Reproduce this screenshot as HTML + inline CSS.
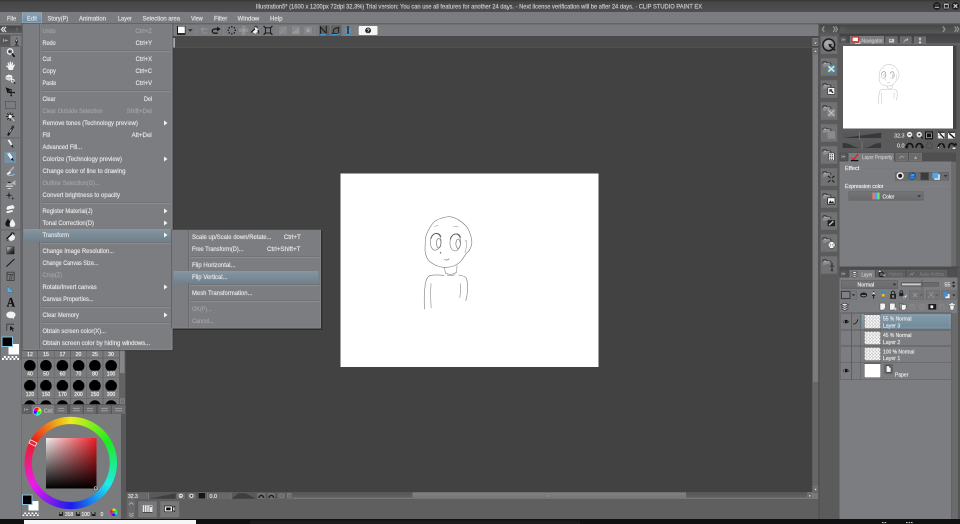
<!DOCTYPE html>
<html lang="en"><head><meta charset="utf-8"><title>CLIP STUDIO PAINT EX - Illustration5</title>
<style>
html,body{margin:0;padding:0;background:#424242;overflow:hidden}
body{width:960px;height:524px;position:relative}
#stage{position:absolute;left:0;top:0;width:1920px;height:1048px;transform:scale(.5);transform-origin:0 0;will-change:transform;font-family:"Liberation Sans",sans-serif;overflow:hidden}
#stage div,#stage span.t{position:absolute}
#stage span.t{white-space:nowrap;display:block;-webkit-text-stroke:.35px currentColor}
#stage svg{position:absolute;left:0;top:0}
#menus{left:0;top:0;width:1920px;height:1048px}

</style></head><body>
<div id="stage">
<div style="left:0px;top:0px;width:1920px;height:24px;background:linear-gradient(#363636 0,#474747 18%,#505050 100%);"></div>
<span class="t" style="top:5.61px;font-size:12px;line-height:14.4px;color:#c9c9c9;left:471.09px;width:973.83px;text-align:center;transform-origin:50% 50%;transform:scaleX(0.959);">Illustration5* (1600 x 1200px 72dpi 32.3%)  Trial version: You can use all features for another 24 days. - Next license verification will be after 24 days. - CLIP STUDIO PAINT EX</span>
<div style="left:0px;top:24px;width:1920px;height:23px;background:#7b7c7f;"></div>
<div style="left:0px;top:45.8px;width:1920px;height:3.6px;background:#646466;"></div>
<div style="left:44px;top:25.2px;width:39.6px;height:20.8px;background:linear-gradient(#86a2b6,#6d8da4);border:1px solid #9cb9cd;box-sizing:border-box;"></div>
<span class="t" style="top:29.64px;font-size:12.2px;line-height:14.64px;color:#e0e0e0;left:14px;transform-origin:0 50%;transform:scaleX(0.936);">File</span>
<span class="t" style="top:29.64px;font-size:12.2px;line-height:14.64px;color:#e0e0e0;left:54px;transform-origin:0 50%;transform:scaleX(0.951);">Edit</span>
<span class="t" style="top:29.64px;font-size:12.2px;line-height:14.64px;color:#e0e0e0;left:95px;transform-origin:0 50%;transform:scaleX(0.930);">Story(P)</span>
<span class="t" style="top:29.64px;font-size:12.2px;line-height:14.64px;color:#e0e0e0;left:158.4px;transform-origin:0 50%;transform:scaleX(0.995);">Animation</span>
<span class="t" style="top:29.64px;font-size:12.2px;line-height:14.64px;color:#e0e0e0;left:236px;transform-origin:0 50%;transform:scaleX(0.898);">Layer</span>
<span class="t" style="top:29.64px;font-size:12.2px;line-height:14.64px;color:#e0e0e0;left:285px;transform-origin:0 50%;transform:scaleX(0.962);">Selection area</span>
<span class="t" style="top:29.64px;font-size:12.2px;line-height:14.64px;color:#e0e0e0;left:381.5px;transform-origin:0 50%;transform:scaleX(0.896);">View</span>
<span class="t" style="top:29.64px;font-size:12.2px;line-height:14.64px;color:#e0e0e0;left:427.5px;transform-origin:0 50%;transform:scaleX(0.977);">Filter</span>
<span class="t" style="top:29.64px;font-size:12.2px;line-height:14.64px;color:#e0e0e0;left:475px;transform-origin:0 50%;transform:scaleX(1.002);">Window</span>
<span class="t" style="top:29.64px;font-size:12.2px;line-height:14.64px;color:#e0e0e0;left:540px;transform-origin:0 50%;transform:scaleX(0.996);">Help</span>
<div style="left:0px;top:49.4px;width:1638px;height:23.2px;background:#7b7c7f;"></div>
<div style="left:44px;top:72.4px;width:1594px;height:22.6px;background:#4a4a4b;"></div>
<div style="left:345.8px;top:75.8px;width:4.4px;height:18.8px;background:#a6a6a8;"></div>
<div style="left:252px;top:95px;width:1373px;height:890px;background:#424242;"></div>
<div style="left:252px;top:94.6px;width:1386px;height:1.6px;background:#58585a;"></div>
<div style="left:681px;top:347px;width:516px;height:387px;background:#ffffff;"></div>
<div style="left:1625px;top:95px;width:12.2px;height:890px;background:#666668;border-left:1px solid #78787a;box-sizing:border-box;"></div>
<div style="left:1625px;top:110px;width:12.2px;height:653px;background:#7b7b7d;"></div>
<div style="left:1624.6px;top:76px;width:12.8px;height:16px;background:#6c6c6e;border:1px solid #88888a;box-sizing:border-box;"></div>
<div style="left:1624.6px;top:96px;width:12.8px;height:12.8px;background:#6c6c6e;border:1px solid #88888a;box-sizing:border-box;"></div>
<div style="left:1624.6px;top:973px;width:12.8px;height:12px;background:#6c6c6e;border:1px solid #88888a;box-sizing:border-box;"></div>
<div style="left:252px;top:984.4px;width:1386px;height:14px;background:#59595a;"></div>
<div style="left:585px;top:985.2px;width:1029px;height:12.4px;background:linear-gradient(#565658,#626264 70%,#7a7a7c 92%);"></div>
<div style="left:825px;top:985.2px;width:546.8px;height:12.4px;background:linear-gradient(#828284,#747476);"></div>
<div style="left:1615px;top:985px;width:10px;height:13px;background:#6c6c6e;border:1px solid #88888a;box-sizing:border-box;"></div>
<div style="left:1625px;top:985px;width:12.4px;height:13px;background:#78787a;"></div>
<div style="left:253.6px;top:985.2px;width:42.8px;height:12.8px;background:#68686a;"></div>
<span class="t" style="top:985.87px;font-size:10.8px;line-height:12.96px;color:#e4e4e4;left:256.4px;transform-origin:0 50%;transform:scaleX(0.932);">32.3</span>
<div style="left:353.2px;top:985.6px;width:16.8px;height:12px;background:#707072;"></div>
<div style="left:375.2px;top:985.6px;width:15.6px;height:12px;background:#707072;"></div>
<div style="left:396px;top:985.2px;width:15.2px;height:12.8px;background:#161616;border:1px solid #707072;box-sizing:border-box;"></div>
<div style="left:414px;top:985.2px;width:1.6px;height:12.8px;background:#7d7d7f;"></div>
<div style="left:416.4px;top:985.2px;width:44.8px;height:12.8px;background:#68686a;"></div>
<span class="t" style="top:985.87px;font-size:10.8px;line-height:12.96px;color:#e4e4e4;left:418.6px;transform-origin:0 50%;transform:scaleX(0.999);">0.0</span>
<div style="left:514px;top:985.6px;width:17.2px;height:12px;background:#707072;"></div>
<div style="left:534.8px;top:985.6px;width:15.6px;height:12px;background:#707072;"></div>
<div style="left:555.2px;top:985.6px;width:15.6px;height:12px;background:#6a6a6c;"></div>
<div style="left:574px;top:986px;width:8.8px;height:11.2px;background:#707072;border:1px solid #88888a;box-sizing:border-box;"></div>
<div style="left:252px;top:998px;width:1386px;height:40px;background:#5f5f60;"></div>
<div style="left:255px;top:999px;width:15px;height:38px;background:#6a6a6c;"></div>
<div style="left:276px;top:1002px;width:38.4px;height:32.6px;background:#78787a;border:1px solid #6a6a6b;box-sizing:border-box;"></div>
<div style="left:320px;top:1002px;width:38.8px;height:32.6px;background:#78787a;border:1px solid #6a6a6b;box-sizing:border-box;"></div>
<div style="left:0px;top:1038px;width:1920px;height:10px;background:#101011;"></div>
<div style="left:48px;top:1039.6px;width:344px;height:8.4px;background:#f6f6f6;"></div>
<div style="left:500px;top:1040.8px;width:660px;height:7.2px;background:#1c1c1d;"></div>
<div style="left:0px;top:47px;width:44px;height:991px;background:#7b7c7f;"></div>
<div style="left:42.6px;top:47px;width:1.8px;height:991px;background:#606061;"></div>
<div style="left:0px;top:51.2px;width:42.6px;height:15.2px;background:linear-gradient(#474748,#5a5a5b);"></div>
<div style="left:0px;top:69.2px;width:42.6px;height:22.8px;background:#5a5a5b;"></div>
<div style="left:2.4px;top:71.2px;width:16.4px;height:16.4px;background:#555557;"></div>
<div style="left:20.8px;top:70.8px;width:21.8px;height:22px;background:#7b7c7f;"></div>
<div style="left:0px;top:92.4px;width:42.6px;height:1.6px;background:#5e5e5f;"></div>
<div style="left:0px;top:92.4px;width:2px;height:628px;background:#666668;"></div>
<div style="left:40px;top:92.4px;width:2.6px;height:628px;background:#6a6a6c;"></div>
<div style="left:2px;top:275.2px;width:39.2px;height:1.8px;background:#5e5e5f;"></div>
<div style="left:2px;top:277px;width:39.2px;height:1.4px;background:#8b8b8e;"></div>
<div style="left:2px;top:459.2px;width:39.2px;height:1.8px;background:#5e5e5f;"></div>
<div style="left:2px;top:461px;width:39.2px;height:1.4px;background:#8b8b8e;"></div>
<div style="left:8.6px;top:304px;width:23.4px;height:22px;background:#7492a6;"></div>
<div style="left:17.2px;top:687.6px;width:20.8px;height:21px;background:#ffffff;"></div>
<div style="left:3.2px;top:672.8px;width:22.4px;height:21.6px;background:#000;border:2.200px solid #86bfe4;box-sizing:border-box;"></div>
<div style="left:3.8px;top:712.4px;width:34.2px;height:7.6px;background:repeating-conic-gradient(#fff 0 25%,#7b7c7f 0 50%) 0 0/7.600px 7.600px;"></div>
<div style="left:44.4px;top:676px;width:194.6px;height:133px;background:#7a7b7d;"></div>
<div style="left:44.4px;top:715.4px;width:194.4px;height:1.6px;background:#646466;"></div>
<span class="t" style="top:701.81px;font-size:10.8px;line-height:12.96px;color:#f0f0f0;left:33.69px;width:52.01px;text-align:center;transform-origin:50% 50%;transform:scaleX(0.950);">12</span>
<span class="t" style="top:701.81px;font-size:10.8px;line-height:12.96px;color:#f0f0f0;left:65.79px;width:52.01px;text-align:center;transform-origin:50% 50%;transform:scaleX(0.950);">15</span>
<span class="t" style="top:701.81px;font-size:10.8px;line-height:12.96px;color:#f0f0f0;left:98.79px;width:52.01px;text-align:center;transform-origin:50% 50%;transform:scaleX(0.950);">17</span>
<span class="t" style="top:701.81px;font-size:10.8px;line-height:12.96px;color:#f0f0f0;left:131.29px;width:52.01px;text-align:center;transform-origin:50% 50%;transform:scaleX(0.950);">20</span>
<span class="t" style="top:701.81px;font-size:10.8px;line-height:12.96px;color:#f0f0f0;left:163.79px;width:52.01px;text-align:center;transform-origin:50% 50%;transform:scaleX(0.950);">25</span>
<span class="t" style="top:701.81px;font-size:10.8px;line-height:12.96px;color:#f0f0f0;left:196.29px;width:52.01px;text-align:center;transform-origin:50% 50%;transform:scaleX(0.950);">30</span>
<div style="left:44.4px;top:754.6px;width:194.4px;height:1.6px;background:#646466;"></div>
<span class="t" style="top:741.01px;font-size:10.8px;line-height:12.96px;color:#f0f0f0;left:33.69px;width:52.01px;text-align:center;transform-origin:50% 50%;transform:scaleX(0.950);">40</span>
<span class="t" style="top:741.01px;font-size:10.8px;line-height:12.96px;color:#f0f0f0;left:65.79px;width:52.01px;text-align:center;transform-origin:50% 50%;transform:scaleX(0.950);">50</span>
<span class="t" style="top:741.01px;font-size:10.8px;line-height:12.96px;color:#f0f0f0;left:98.79px;width:52.01px;text-align:center;transform-origin:50% 50%;transform:scaleX(0.950);">60</span>
<span class="t" style="top:741.01px;font-size:10.8px;line-height:12.96px;color:#f0f0f0;left:131.29px;width:52.01px;text-align:center;transform-origin:50% 50%;transform:scaleX(0.950);">70</span>
<span class="t" style="top:741.01px;font-size:10.8px;line-height:12.96px;color:#f0f0f0;left:163.79px;width:52.01px;text-align:center;transform-origin:50% 50%;transform:scaleX(0.950);">80</span>
<span class="t" style="top:741.01px;font-size:10.8px;line-height:12.96px;color:#f0f0f0;left:193.29px;width:58.02px;text-align:center;transform-origin:50% 50%;transform:scaleX(0.950);">100</span>
<div style="left:44.4px;top:795.6px;width:194.4px;height:1.6px;background:#646466;"></div>
<span class="t" style="top:782.01px;font-size:10.8px;line-height:12.96px;color:#f0f0f0;left:30.69px;width:58.02px;text-align:center;transform-origin:50% 50%;transform:scaleX(0.950);">120</span>
<span class="t" style="top:782.01px;font-size:10.8px;line-height:12.96px;color:#f0f0f0;left:62.79px;width:58.02px;text-align:center;transform-origin:50% 50%;transform:scaleX(0.950);">150</span>
<span class="t" style="top:782.01px;font-size:10.8px;line-height:12.96px;color:#f0f0f0;left:95.79px;width:58.02px;text-align:center;transform-origin:50% 50%;transform:scaleX(0.950);">170</span>
<span class="t" style="top:782.01px;font-size:10.8px;line-height:12.96px;color:#f0f0f0;left:128.29px;width:58.02px;text-align:center;transform-origin:50% 50%;transform:scaleX(0.950);">200</span>
<span class="t" style="top:782.01px;font-size:10.8px;line-height:12.96px;color:#f0f0f0;left:160.79px;width:58.02px;text-align:center;transform-origin:50% 50%;transform:scaleX(0.950);">250</span>
<span class="t" style="top:782.01px;font-size:10.8px;line-height:12.96px;color:#f0f0f0;left:193.29px;width:58.02px;text-align:center;transform-origin:50% 50%;transform:scaleX(0.950);">300</span>
<div style="left:44.4px;top:808.2px;width:194.4px;height:1.6px;background:#646466;"></div>
<div style="left:74.2px;top:676px;width:1.6px;height:133px;background:#646466;"></div>
<div style="left:107.8px;top:676px;width:1.6px;height:133px;background:#646466;"></div>
<div style="left:140.2px;top:676px;width:1.6px;height:133px;background:#646466;"></div>
<div style="left:172.8px;top:676px;width:1.6px;height:133px;background:#646466;"></div>
<div style="left:205.2px;top:676px;width:1.6px;height:133px;background:#646466;"></div>
<div style="left:237.8px;top:676px;width:1.6px;height:133px;background:#646466;"></div>
<div style="left:239.2px;top:676px;width:11.2px;height:133px;background:#636364;"></div>
<div style="left:239.8px;top:701px;width:9.2px;height:44.6px;background:#878789;"></div>
<div style="left:239.8px;top:797.2px;width:10px;height:10px;background:#707072;border:1px solid #909092;box-sizing:border-box;"></div>
<div style="left:250.4px;top:73px;width:2px;height:965px;background:#4e4e4f;"></div>
<div style="left:44.4px;top:809px;width:206px;height:229px;background:#7a7b7d;"></div>
<div style="left:44.4px;top:808.8px;width:206.4px;height:18.8px;background:#58585a;"></div>
<div style="left:44.8px;top:810.8px;width:16px;height:16px;background:#626264;"></div>
<div style="left:63px;top:810.4px;width:45.8px;height:17.6px;background:#7a7b7d;"></div>
<span class="t" style="top:814.75px;font-size:10.8px;line-height:12.96px;color:#c2c2c4;left:88px;transform-origin:0 50%;transform:scaleX(0.958);">Col:</span>
<div style="left:111px;top:811.2px;width:23px;height:16px;background:#6c6c6e;border:1px solid #78787a;box-sizing:border-box;"></div>
<div style="left:140.8px;top:811.2px;width:24px;height:16px;background:#6c6c6e;border:1px solid #78787a;box-sizing:border-box;"></div>
<div style="left:168.4px;top:811.2px;width:22.8px;height:16px;background:#6c6c6e;border:1px solid #78787a;box-sizing:border-box;"></div>
<div style="left:197px;top:811.2px;width:24px;height:16px;background:#6c6c6e;border:1px solid #78787a;box-sizing:border-box;"></div>
<div style="left:224.4px;top:811.2px;width:25.2px;height:16px;background:#6c6c6e;border:1px solid #78787a;box-sizing:border-box;"></div>
<div style="left:241.6px;top:827.6px;width:9.4px;height:210.4px;background:#59595b;"></div>
<div style="left:48.3px;top:832.6px;width:186.8px;height:186.8px;border-radius:50%;background:conic-gradient(hsl(60,85%,52%) 0deg,hsl(90,85%,52%) 30deg,hsl(120,85%,52%) 60deg,hsl(150,85%,52%) 90deg,hsl(180,85%,52%) 120deg,hsl(210,85%,52%) 150deg,hsl(240,85%,52%) 180deg,hsl(270,85%,52%) 210deg,hsl(300,85%,52%) 240deg,hsl(330,85%,52%) 270deg,hsl(0,85%,52%) 300deg,hsl(30,85%,52%) 330deg,hsl(60,85%,52%) 360deg);-webkit-mask:radial-gradient(circle closest-side,transparent 83%,#000 84.600%,#000 98.900%,transparent 100%);mask:radial-gradient(circle closest-side,transparent 83%,#000 84.600%,#000 98.900%,transparent 100%);"></div>
<div style="left:91.6px;top:876px;width:101.6px;height:101.4px;background:linear-gradient(to top,#000,rgba(0,0,0,0)),linear-gradient(to right,#f4eeee,#ee1c26);"></div>
<div style="left:57.4px;top:1001.6px;width:19.2px;height:19.4px;background:#fff;"></div>
<div style="left:44.4px;top:989.2px;width:20.4px;height:20.4px;background:#000;border:2.200px solid #86bfe4;box-sizing:border-box;"></div>
<div style="left:45.2px;top:1024.6px;width:32.4px;height:7.2px;background:repeating-conic-gradient(#fff 0 25%,#7b7c7f 0 50%) 0 0/7.200px 7.200px;"></div>
<div style="left:117.6px;top:1023.6px;width:8.4px;height:8.4px;background:#222;"></div>
<div style="left:119.2px;top:1025.2px;width:5.2px;height:2px;background:#ddd;"></div>
<span class="t" style="top:1022.47px;font-size:10.8px;line-height:12.96px;color:#ececec;left:130px;transform-origin:0 50%;transform:scaleX(0.910);">358</span>
<div style="left:152px;top:1023.6px;width:8.4px;height:8.4px;background:#222;"></div>
<div style="left:153.6px;top:1025.2px;width:5.2px;height:2px;background:#ddd;"></div>
<span class="t" style="top:1022.47px;font-size:10.8px;line-height:12.96px;color:#ececec;left:163px;transform-origin:0 50%;transform:scaleX(0.910);">100</span>
<div style="left:182.6px;top:1023.6px;width:8.4px;height:8.4px;background:#222;"></div>
<div style="left:184.2px;top:1025.2px;width:5.2px;height:2px;background:#ddd;"></div>
<span class="t" style="top:1022.47px;font-size:10.8px;line-height:12.96px;color:#ececec;left:201.4px;transform-origin:0 50%;transform:scaleX(0.932);">0</span>
<div style="left:219.6px;top:1017.2px;width:15.2px;height:15.2px;border-radius:50%;background:conic-gradient(#ffff00,#00ff00 60deg,#00ffff 120deg,#0000ff 180deg,#ff00ff 240deg,#ff0000 300deg,#ffff00 360deg);-webkit-mask:radial-gradient(circle closest-side,transparent 38%,#000 46%,#000 96%,transparent 100%);mask:radial-gradient(circle closest-side,transparent 38%,#000 46%,#000 96%,transparent 100%);"></div>
<div style="left:65.8px;top:813.6px;width:17.2px;height:17.2px;border-radius:50%;background:conic-gradient(#ff0000,#ffff00 60deg,#00ff00 120deg,#00ffff 180deg,#0000ff 240deg,#ff00ff 300deg,#ff0000 360deg);border:1px solid #eee;box-sizing:border-box;"></div>
<div style="left:393px;top:50.8px;width:1.2px;height:20.4px;background:#8a8b8e;"></div>
<div style="left:447px;top:50.8px;width:1.2px;height:20.4px;background:#8a8b8e;"></div>
<div style="left:552px;top:50.8px;width:1.2px;height:20.4px;background:#8a8b8e;"></div>
<div style="left:629px;top:50.8px;width:1.2px;height:20.4px;background:#8a8b8e;"></div>
<div style="left:710px;top:50.8px;width:1.2px;height:20.4px;background:#8a8b8e;"></div>
<div style="left:1638px;top:47px;width:282px;height:991px;background:#5b5b5c;"></div>
<div style="left:1637.2px;top:47px;width:1.6px;height:991px;background:#4e4e4f;"></div>
<div style="left:1638.8px;top:49.2px;width:38px;height:17.8px;background:linear-gradient(#464647,#58585a);"></div>
<div style="left:1677.8px;top:49.2px;width:242.2px;height:17.8px;background:linear-gradient(#464647,#58585a);"></div>
<div style="left:1676.6px;top:49.2px;width:1.6px;height:17.8px;background:#3c3c3d;"></div>
<div style="left:1641.2px;top:71.6px;width:34px;height:36.6px;background:#727274;border:1px solid #666668;box-sizing:border-box;"></div>
<div style="left:1641.2px;top:115.6px;width:34px;height:36.6px;background:#727274;border:1px solid #666668;box-sizing:border-box;"></div>
<div style="left:1641.2px;top:159.6px;width:34px;height:36.6px;background:#727274;border:1px solid #666668;box-sizing:border-box;"></div>
<div style="left:1641.2px;top:203.6px;width:34px;height:36.6px;background:#727274;border:1px solid #666668;box-sizing:border-box;"></div>
<div style="left:1641.2px;top:247.6px;width:34px;height:36.6px;background:#727274;border:1px solid #666668;box-sizing:border-box;"></div>
<div style="left:1641.2px;top:291.6px;width:34px;height:36.6px;background:#727274;border:1px solid #666668;box-sizing:border-box;"></div>
<div style="left:1641.2px;top:335.6px;width:34px;height:36.6px;background:#727274;border:1px solid #666668;box-sizing:border-box;"></div>
<div style="left:1641.2px;top:379.6px;width:34px;height:36.6px;background:#727274;border:1px solid #666668;box-sizing:border-box;"></div>
<div style="left:1641.2px;top:423.6px;width:34px;height:36.6px;background:#727274;border:1px solid #666668;box-sizing:border-box;"></div>
<div style="left:1641.2px;top:467.6px;width:34px;height:36.6px;background:#727274;border:1px solid #666668;box-sizing:border-box;"></div>
<div style="left:1641.2px;top:511.6px;width:34px;height:36.6px;background:#727274;border:1px solid #666668;box-sizing:border-box;"></div>
<div style="left:1679px;top:67px;width:241px;height:238px;background:#5b5b5c;"></div>
<div style="left:1679px;top:67px;width:241px;height:19.2px;background:linear-gradient(#424244,#4e4e50);"></div>
<div style="left:1679px;top:86px;width:241px;height:5.2px;background:#616163;"></div>
<div style="left:1680.6px;top:73.2px;width:12.4px;height:12.4px;background:#57575a;"></div>
<div style="left:1699.6px;top:71.6px;width:68.8px;height:16.8px;background:#7b7c7f;"></div>
<span class="t" style="top:74.55px;font-size:10.8px;line-height:12.96px;color:#c4c4c6;left:1723.2px;transform-origin:0 50%;transform:scaleX(0.926);">Navigator</span>
<div style="left:1771.2px;top:73.2px;width:24px;height:15.2px;background:#6a6a6c;border:1px solid #78787a;box-sizing:border-box;"></div>
<div style="left:1800.4px;top:73.2px;width:23px;height:15.2px;background:#6a6a6c;border:1px solid #78787a;box-sizing:border-box;"></div>
<div style="left:1828px;top:73.2px;width:24px;height:15.2px;background:#6a6a6c;border:1px solid #78787a;box-sizing:border-box;"></div>
<div style="left:1681.2px;top:91.2px;width:238px;height:214px;background:#5b5b5c;"></div>
<div style="left:1686px;top:92px;width:220px;height:165px;background:#ffffff;"></div>
<div style="left:1906.4px;top:91.2px;width:6.4px;height:167.2px;background:#434345;"></div>
<div style="left:1684px;top:264.8px;width:79.2px;height:12px;background:#58585a;"></div>
<div style="left:1684px;top:284.4px;width:79.2px;height:12.8px;background:#58585a;"></div>
<span class="t" style="top:264.67px;font-size:10.8px;line-height:12.96px;color:#d9d9db;right:110.8px;transform-origin:100% 50%;transform:scaleX(0.990);">32.3</span>
<span class="t" style="top:285.27px;font-size:10.8px;line-height:12.96px;color:#d9d9db;right:110.8px;transform-origin:100% 50%;transform:scaleX(1.012);">0.0</span>
<div style="left:1679px;top:304.8px;width:241px;height:18px;background:#4f4f51;"></div>
<div style="left:1680.6px;top:306.8px;width:12.4px;height:12.8px;background:#57575a;"></div>
<div style="left:1697.2px;top:305.6px;width:90.8px;height:17.2px;background:#7b7c7f;"></div>
<span class="t" style="top:309.49px;font-size:10px;line-height:12px;color:#c3c3c5;left:1723.6px;transform-origin:0 50%;transform:scaleX(0.930);">Layer Property</span>
<div style="left:1790.8px;top:306.4px;width:24.8px;height:16px;background:#6a6a6c;border:1px solid #78787a;box-sizing:border-box;"></div>
<div style="left:1818.4px;top:306.4px;width:25.6px;height:16px;background:#6a6a6c;border:1px solid #78787a;box-sizing:border-box;"></div>
<div style="left:1679px;top:322.8px;width:224.4px;height:210.4px;background:#7c7d80;"></div>
<div style="left:1903.2px;top:322.8px;width:10.4px;height:210.4px;background:#6c6c6e;border:1px solid #5e5e60;box-sizing:border-box;"></div>
<div style="left:1912px;top:304.8px;width:8px;height:230.4px;background:#5b5b5c;"></div>
<span class="t" style="top:329.64px;font-size:11px;line-height:13.2px;color:#ededed;left:1689.6px;transform-origin:0 50%;transform:scaleX(1.024);">Effect</span>
<div style="left:1719.2px;top:335.6px;width:180px;height:1px;background:#77787b;"></div>
<div style="left:1789.6px;top:344px;width:108.8px;height:17px;background:#6c6c6f;border:1px solid #5f5f61;box-sizing:border-box;border-radius:1px;"></div>
<span class="t" style="top:366.44px;font-size:11px;line-height:13.2px;color:#ededed;left:1689.6px;transform-origin:0 50%;transform:scaleX(0.947);">Expression color</span>
<div style="left:1769.6px;top:372.4px;width:130px;height:1px;background:#86878a;"></div>
<div style="left:1697.2px;top:382.6px;width:149.6px;height:18.8px;background:linear-gradient(#747477,#6a6a6d);border:1px solid #5f5f61;box-sizing:border-box;border-radius:1px;"></div>
<span class="t" style="top:386.64px;font-size:11px;line-height:13.2px;color:#ededed;left:1764.6px;transform-origin:0 50%;transform:scaleX(0.898);">Color</span>
<div style="left:1679px;top:533.2px;width:241px;height:22px;background:#4f4f51;"></div>
<div style="left:1679px;top:535.2px;width:241px;height:2.4px;background:#4a4a4b;"></div>
<div style="left:1680.6px;top:541.2px;width:12.4px;height:12.8px;background:#57575a;"></div>
<div style="left:1698.8px;top:539.6px;width:51.2px;height:17.6px;background:#7b7c7f;"></div>
<span class="t" style="top:542.67px;font-size:10.8px;line-height:12.96px;color:#c9c9cb;left:1723.2px;transform-origin:0 50%;transform:scaleX(0.800);">Layer</span>
<div style="left:1752.4px;top:540px;width:58px;height:16px;background:#5d5d5f;border:1px solid #6a6a6c;box-sizing:border-box;"></div>
<span class="t" style="top:543.49px;font-size:10px;line-height:12px;color:#7b7b7d;left:1777.2px;transform-origin:0 50%;transform:scaleX(0.932);">History</span>
<div style="left:1812.8px;top:540px;width:80.8px;height:16px;background:#5d5d5f;border:1px solid #6a6a6c;box-sizing:border-box;"></div>
<span class="t" style="top:543.49px;font-size:10px;line-height:12px;color:#7b7b7d;left:1838.8px;transform-origin:0 50%;transform:scaleX(0.969);">Auto Action</span>
<div style="left:1679px;top:554.6px;width:236px;height:483.4px;background:#7c7d80;"></div>
<div style="left:1902px;top:626px;width:11.6px;height:412px;background:#6b6b6d;border-left:1px solid #5e5e60;box-sizing:border-box;"></div>
<div style="left:1915px;top:535.2px;width:5px;height:502.8px;background:#565657;"></div>
<div style="left:1682px;top:560px;width:114.4px;height:17.6px;background:linear-gradient(#747477,#6b6b6e);border:1px solid #5f5f61;box-sizing:border-box;border-radius:1px;"></div>
<span class="t" style="top:563.24px;font-size:11px;line-height:13.2px;color:#ededed;left:1694.27px;width:75.45px;text-align:center;transform-origin:50% 50%;transform:scaleX(0.937);">Normal</span>
<div style="left:1802px;top:564px;width:75.6px;height:9.4px;background:#6a6a6c;border:1px solid #58585a;box-sizing:border-box;"></div>
<span class="t" style="top:563.24px;font-size:11px;line-height:13.2px;color:#e4e4e6;left:1889px;transform-origin:0 50%;transform:scaleX(0.948);">55</span>
<div style="left:1681.2px;top:581.2px;width:32.4px;height:18px;background:#78797c;border:1px solid #68686a;box-sizing:border-box;"></div>
<div style="left:1682px;top:582px;width:18.8px;height:15.6px;background:#7f8083;border:2px solid #3e3e40;box-sizing:border-box;"></div>
<div style="left:1818px;top:581.2px;width:30px;height:18px;background:#747477;border:1px solid #646466;box-sizing:border-box;"></div>
<div style="left:1851.6px;top:581.2px;width:27.2px;height:18px;background:#747477;border:1px solid #646466;box-sizing:border-box;"></div>
<div style="left:1883.4px;top:581.2px;width:30px;height:18px;background:#747477;border:1px solid #646466;box-sizing:border-box;"></div>
<div style="left:1679px;top:602.8px;width:236px;height:1.2px;background:#747578;"></div>
<div style="left:1681.2px;top:625.2px;width:221.6px;height:1.6px;background:#5e5e60;"></div>
<div style="left:1722.8px;top:627.8px;width:179.2px;height:30.6px;background:linear-gradient(#849baa,#718a99);outline:1px dotted #90a6b3;outline-offset:-3px;"></div>
<div style="left:1681.2px;top:659px;width:221.6px;height:1.6px;background:#5e5e60;"></div>
<div style="left:1728.4px;top:628.6px;width:33.8px;height:29px;background:repeating-conic-gradient(#cbcbcb 0 25%,#ffffff 0 50%) 0 0/6.400px 6.400px;border:1.500px solid #454547;box-sizing:border-box;"></div>
<span class="t" style="top:631.3px;font-size:11px;line-height:13.2px;color:#e8e8ea;left:1765.8px;transform-origin:0 50%;transform:scaleX(0.897);">55 % Normal</span>
<span class="t" style="top:644.5px;font-size:11px;line-height:13.2px;color:#e8e8ea;left:1765.8px;transform-origin:0 50%;transform:scaleX(0.938);">Layer 3</span>
<div style="left:1681.2px;top:691.2px;width:221.6px;height:1.6px;background:#5e5e60;"></div>
<div style="left:1728.4px;top:661.6px;width:33.8px;height:28.2px;background:repeating-conic-gradient(#cbcbcb 0 25%,#ffffff 0 50%) 0 0/6.400px 6.400px;border:1.500px solid #454547;box-sizing:border-box;"></div>
<span class="t" style="top:664.3px;font-size:11px;line-height:13.2px;color:#e8e8ea;left:1765.8px;transform-origin:0 50%;transform:scaleX(0.897);">45 % Normal</span>
<span class="t" style="top:677.5px;font-size:11px;line-height:13.2px;color:#e8e8ea;left:1765.8px;transform-origin:0 50%;transform:scaleX(0.938);">Layer 2</span>
<div style="left:1681.2px;top:723.6px;width:221.6px;height:1.6px;background:#5e5e60;"></div>
<div style="left:1728.4px;top:693.8px;width:33.8px;height:28.4px;background:repeating-conic-gradient(#cbcbcb 0 25%,#ffffff 0 50%) 0 0/6.400px 6.400px;border:1.500px solid #454547;box-sizing:border-box;"></div>
<span class="t" style="top:696.5px;font-size:11px;line-height:13.2px;color:#e8e8ea;left:1765.8px;transform-origin:0 50%;transform:scaleX(0.898);">100 % Normal</span>
<span class="t" style="top:709.7px;font-size:11px;line-height:13.2px;color:#e8e8ea;left:1765.8px;transform-origin:0 50%;transform:scaleX(0.938);">Layer 1</span>
<div style="left:1681.2px;top:757.8px;width:221.6px;height:1.6px;background:#5e5e60;"></div>
<div style="left:1728.4px;top:726.8px;width:33.8px;height:29.2px;background:#ffffff;border:1.500px solid #454547;box-sizing:border-box;"></div>
<span class="t" style="top:743.3px;font-size:11px;line-height:13.2px;color:#e8e8ea;left:1790.4px;transform-origin:0 50%;transform:scaleX(0.913);">Paper</span>
<div style="left:1680.8px;top:626px;width:1.6px;height:134px;background:#5e5e60;"></div>
<div style="left:1702.4px;top:626px;width:1.6px;height:134px;background:#5e5e60;"></div>
<div style="left:1720.8px;top:626px;width:1.6px;height:134px;background:#5e5e60;"></div>
<div style="left:1902px;top:626px;width:1.2px;height:134px;background:#5e5e60;"></div>
<span class="t" style="top:589.2px;font-size:26px;line-height:31.2px;color:#101010;left:-6.87px;width:57.34px;text-align:center;transform-origin:50% 50%;transform:scaleX(0.900);font-family:'Liberation Serif',serif;font-weight:bold;">A</span>
<svg width="1920" height="1048" viewBox="0 0 960 524">
<g id="sk" fill="none" stroke="#7c7c7c" stroke-width=".62" stroke-linecap="round" stroke-linejoin="round"><path d="M449.8 216.7C452.5 217.0 455.5 218.1 458.3 219.8C461.1 221.5 464.8 224.2 466.9 227.1C469.0 229.9 470.3 234.1 471.1 236.9C471.9 239.8 472.0 242.0 471.7 244.2C471.4 246.4 470.2 248.7 469.3 250.3C468.4 251.9 467.6 251.8 466.2 253.6C464.8 255.4 462.6 259.3 460.7 261.3C458.8 263.3 456.9 264.6 454.6 265.6C452.3 266.6 448.7 267.1 446.7 267.4C444.7 267.7 444.3 267.6 442.4 267.2C440.5 266.8 437.4 266.2 435.1 265.0C432.8 263.8 430.0 262.2 428.4 260.1C426.8 258.1 425.8 255.3 425.3 252.7C424.8 250.0 425.0 247.2 425.2 244.2C425.4 241.1 425.1 238.1 426.5 234.4C427.9 230.7 431.2 224.9 433.9 222.2C436.5 219.4 439.8 218.8 442.4 217.9C445.0 217.0 447.1 216.4 449.8 216.7"/><ellipse cx="435.700" cy="241.900" rx="5.300" ry="8.300" transform="rotate(5 435.700 241.900)"/><ellipse cx="455.300" cy="242.500" rx="5.300" ry="8.400" transform="rotate(4 455.300 242.500)"/><ellipse cx="438.700" cy="243.200" rx="2.300" ry="4.800" stroke="#6c6c6c"/><ellipse cx="458.100" cy="243.700" rx="2.200" ry="4.600" stroke="#6c6c6c"/><path d="M430.800 238.600c.8-3.400 3.400-5.400 6.400-5.200c1.800.2 3 1.400 3.600 3.200M450.400 239c.8-3.400 3.600-5.400 6.600-5c1.800.4 3 1.600 3.400 3.400" stroke="#5c5c5c" stroke-width=".9"/><path d="M434.500 226.500l3.700-1.200M453.400 226.400c1.600-.4 3.400-.2 4.900.7" stroke="#a8a8a8"/><path d="M465 241.200c1.200-1.200 2-.4 1.800 1.400c-.2 3.400-.8 7-1.800 10" stroke="#9a9a9a"/><path d="M440.500 252.200l.3 1.200" stroke="#5c5c5c" stroke-width=".8"/><path d="M444.300 259.300c1.400 1.200 3.400 1 4.800-.5" stroke="#6a6a6a"/><path d="M444.400 267.300l1 5.800M457 265.700l-.4 6.600M445.600 273.200c3 1.800 7.400 1.600 10.600-.8M447 275c2.600 1 5.600.8 8-.4" stroke="#8c8c8c"/><path d="M444 275.400c-5-.6-10-.6-14 .2c-3 1.200-4.200 5-4.800 9c-.8 7-1.400 16-.6 24.400"/><path d="M431 283.600c-.6 8-.4 16 .2 24.400" stroke="#8c8c8c"/><path d="M458.600 275c3 .4 6 1 7.400 2.600c1.600 3 1.800 8 1.400 14c-.2 3.400-.8 6.400-1.600 9"/><path d="M460.400 283.600c.2 5 0 10-.6 14" stroke="#8c8c8c"/></g>
<use href="#sk" transform="translate(843 46) scale(.4264) translate(-340.500 -173.500)" stroke-width="1"/>
<circle cx="936.9" cy="6" r="3.900" fill="#202020"/>
<circle cx="946.3" cy="6" r="3.900" fill="#202020"/>
<circle cx="955.5" cy="6" r="3.900" fill="#202020"/>
<path d="M934.900 7.300h4.200" stroke="#c6c6c6" stroke-width="1"/><path d="M935.100 4.900h3.800" stroke="#8a8a8a" stroke-width=".5"/>
<rect x="944.300" y="4" width="4" height="4" fill="none" stroke="#c2c2c2" stroke-width=".9"/><path d="M944.300 4.300h4" stroke="#c2c2c2" stroke-width="1.200"/>
<path d="M953.700 4.200l3.600 3.600M957.300 4.200l-3.600 3.600" stroke="#cacaca" stroke-width="1.300"/>
<path d="M814.3 42.5h2.4l-1.2 1.6z" fill="#ddd"/><path d="M814.3 52h2.4l-1.2-1.6z" fill="#ddd"/><path d="M814.3 488.8h2.4l-1.2 1.6z" fill="#ddd"/>
<path d="M809.2 494.6v2.4l1.6-1.2z" fill="#ddd"/>
<path d="M547 495.2h3M547 496.4h3" stroke="#8e8e90" stroke-width=".5"/>
<path d="M149.400 498.600L175.600 493.400V498.600z" fill="#3e3e3f"/><path d="M148.500 492.600v6.400" stroke="#88888a" stroke-width=".8"/>
<circle cx="180.800" cy="495.800" r="2.100" fill="#ececec"/><path d="M179.600 495.800h2.400" stroke="#333" stroke-width=".8"/>
<circle cx="191.400" cy="495.800" r="2.100" fill="#ececec"/><path d="M190.200 495.800h2.400M191.400 494.600v2.400" stroke="#333" stroke-width=".8"/>
<path d="M231.800 498.600L238.400 493.400H245.900L255.300 498.600z" fill="#3e3e3f"/><path d="M231 492.600v6.400" stroke="#88888a" stroke-width=".8"/>
<path d="M259.0 498a2.300 2.600 0 1 1 4.600 0" fill="none" stroke="#1c1c1c" stroke-width="1.400"/>
<path d="M269.0 498a2.300 2.600 0 1 1 4.600 0" fill="none" stroke="#1c1c1c" stroke-width="1.400"/>
<circle cx="281.500" cy="495.800" r="2" fill="none" stroke="#8c8c8e" stroke-width=".8" stroke-dasharray="1 .8"/>
<path d="M129 504.600l2.300-2 2.300 2" fill="none" stroke="#a4a4a6" stroke-width="1.100"/><path d="M129 512.800l2.300 1.800 2.300-1.800M129 515l2.300 1.800 2.300-1.800" fill="none" stroke="#a4a4a6" stroke-width="1"/>
<rect x="142.8" y="505.2" width="9.6" height="7" fill="#e8e8e8"/><path d="M144.7 505.2v7M146.9 505.2v7M149.1 505.2v7" stroke="#555" stroke-width=".6"/><rect x="150" y="505.8" width="2" height="1.3" fill="#4a7fb0"/><path d="M142.8 512.4h9.6" stroke="#333" stroke-width=".7"/>
<rect x="164.400" y="506" width="8" height="5.800" rx=".6" fill="#ececec" stroke="#1a1a1a" stroke-width=".7"/><rect x="166.200" y="507.500" width="4.400" height="2.800" fill="#0c0c0c"/><path d="M172.800 507.600l2-1.400v5.400l-2-1.400z" fill="#e4e4e4" stroke="#1a1a1a" stroke-width=".6"/>
<path d="M882 522.6h1.6M884.6 522.6h1.6M906 522.6h1.6M908.6 522.6h1.6M911 522.6h1.6" stroke="#d8d8d8" stroke-width="1"/>
<path d="M3.6 26.800l-2.200 2.600 2.200 2.600M6 26.800l-2.200 2.600 2.200 2.600" fill="none" stroke="#e2e2e2" stroke-width="1.200"/><path d="M16.4 27.4v4M17.8 27.4v4" stroke="#6e6e70" stroke-width=".6"/>
<path d="M3.6 38.6v3.6M4.6 40.4h3M6 39.2v2.4" stroke="#bdbdbf" stroke-width=".7"/>
<path d="M16.6 37.2l1.3 4.6l-1.3 2.4l-1.3-2.4z" fill="#1a1a1a"/><path d="M16.6 38.2l.6 3.2h-1.2z" fill="#e0e0e0"/><path d="M15 45h3.4" stroke="#1a1a1a" stroke-width="1"/>
<circle cx="10.100" cy="51.500" r="2.700" fill="#6e6e70" stroke="#f2f2f2" stroke-width="1.300"/><path d="M12.300 54l1.800 2.400" stroke="#151515" stroke-width="1.700" stroke-linecap="round"/><path d="M9 52.300l1.400-1.200" stroke="#151515" stroke-width=".9"/>
<path d="M8.800 70L7.900 67.600L6 66.200L6.700 65.200L8.500 66.200L7.500 63L8.600 62.500L9.700 65.200L9.700 61.700L10.900 61.500L11.200 65.100L12 62.100L13.100 62.300L12.700 65.700L14.100 64.300L14.900 65L13.500 67.800L12.900 70Z" fill="#f2f2f2"/>
<path d="M5.4 76l3.2-1.8 4 1.2v4l-3.4 1.6-3.8-1.4z" fill="#f2f2f2" stroke="#555" stroke-width=".4"/><path d="M6 77.6h5M6 79h5" stroke="#8a8a8a" stroke-width=".5"/><circle cx="12.8" cy="80.8" r="1.5" fill="none" stroke="#f2f2f2" stroke-width=".9"/><path d="M13.8 82l1.3 1.5" stroke="#151515" stroke-width="1.1"/>
<path d="M5.6 87.2l6 2.4-2.4.8 2.6 2.6-.9.9-2.6-2.6-.8 2.2z" fill="#151515"/><path d="M11.2 89v7M7.8 92.6h7" stroke="#151515" stroke-width=".9"/><path d="M11.2 96.6l-1.2-1.4h2.4zM15.2 92.6l-1.4-1.2v2.4z" fill="#151515"/>
<rect x="5.4" y="101.3" width="10" height="7.4" fill="none" stroke="#3a3a3a" stroke-width=".65" stroke-dasharray="1.3 .8"/>
<path d="M10.2 112.4v8.4M6 116.6h8.4M7.2 113.6l6 6M13.2 113.6l-6 6" stroke="#151515" stroke-width=".9"/><circle cx="10.2" cy="116.6" r="1.7" fill="#f2f2f2"/><path d="M11.6 118l2.8 3" stroke="#d8d8d8" stroke-width="1"/>
<path d="M8.300 134.800l3.400-5.800" stroke="#151515" stroke-width="2" stroke-linecap="round"/><path d="M11.500 129.400l1.400-2.600" stroke="#333" stroke-width="2.400" stroke-linecap="round"/><path d="M9.500 132.600l1.700-3" stroke="#e4e4e4" stroke-width=".8"/>
<path d="M7.4 140.2l2.2-.6 2.8 5-1.6 1.2z" fill="#f2f2f2"/><path d="M10.8 145.8l1.6-1.2 1.2 3.6z" fill="#151515"/><path d="M7.4 140.2l3.4 5.6" stroke="#777" stroke-width=".5"/>
<path d="M7 153.6l2.6-1 3.2 5.2-2 1.4z" fill="#f2f2f2"/><path d="M10.8 159.2l2-1.4 .9 3.4z" fill="#151515"/><path d="M7 153.6l2.6-1 .6 1-2.6 1.1z" fill="#d0d0d0"/>
<path d="M13.900 167l-4.600 5" stroke="#d6d6d6" stroke-width="1.300"/><path d="M13.900 167l-4.600 5" stroke="#555" stroke-width=".4"/><path d="M9.800 171.200l-3.400 2.600 1.400 1.400 3.200-2.400z" fill="#f2f2f2"/><path d="M7 174.600c2.400 1.200 5.600.8 7.800-.4" stroke="#8fc4ea" stroke-width="1.100" fill="none"/>
<path d="M11.400 183.400l4-3.400v5.400z" fill="#b9b9bb"/><ellipse cx="9.400" cy="186" rx="3.600" ry="2.900" fill="#f2f2f2"/><path d="M6 185h6.800M6.200 187.200h6.400" stroke="#2a2a2a" stroke-width=".8"/><path d="M7.800 181.800h3v1.600h-3z" fill="#2a2a2a"/>
<path d="M9 191.4l.7 3.2 3 .7-3 .7-.7 3.2-.7-3.2-3-.7 3-.7z" fill="#2a2a2a"/><path d="M12.8 196.6l.4 1.4 1.4.4-1.4.4-.4 1.4-.4-1.4-1.4-.4 1.4-.4z" fill="#2a2a2a"/>
<path d="M7.6 206.2l5.4-1.2 1.6 2.4-1.6 2.2-5.6 1.2-1-2.6z" fill="#f2f2f2"/><path d="M6.4 211.2l5.6-1.2 1.4 1.4-5.6 1.8-1.6-1z" fill="#f2f2f2"/><path d="M6.6 210.6l6.6-1.6" stroke="#555" stroke-width=".7"/>
<path d="M8 218.600c-1.600 2.400-2.600 3.800-2.600 5.400 0 1.500 1.200 2.600 2.800 2.600s2.800-1.100 2.800-2.600c0-1.600-1.400-3-3-5.400z" fill="#151515"/><path d="M12.400 219c-1.600 2.400-2.800 3.800-2.800 5.400 0 1.500 1.200 2.600 2.800 2.600s2.800-1.100 2.800-2.600c0-1.600-1.200-3-2.800-5.400z" fill="#f2f2f2"/>
<path d="M7.600 237.600l4.600-3.600 3 2.600-1 3.200-3.600 1.400z" fill="#f2f2f2"/><path d="M6.400 239l5.400-5" stroke="#151515" stroke-width="1.300"/><path d="M10.800 233.600c1-1.200 3.200-1 3.600.8" stroke="#151515" stroke-width=".9" fill="none"/><path d="M6 240.600l1.400-1.400 1 1.800z" fill="#444"/>
<defs><linearGradient id="gtool" x1="0" y1="0" x2="1" y2="1"><stop offset="0" stop-color="#f0f0f0"/><stop offset=".5" stop-color="#4a4a4a"/><stop offset="1" stop-color="#050505"/></linearGradient></defs><rect x="6.900" y="246.900" width="7.200" height="7" fill="url(#gtool)" stroke="#2a2a2a" stroke-width=".5"/>
<path d="M6.400 266.600l8-7.600" stroke="#151515" stroke-width="1"/>
<rect x="7" y="272.200" width="7.200" height="8.200" fill="none" stroke="#3a3a3a" stroke-width=".8"/><path d="M7 274.400h7.200M10.400 274.400l-1.200 6M12.400 274.400l-1.400 6" stroke="#3a3a3a" stroke-width=".7"/>
<path d="M7.200 286.200l6.400 6.200h-6.400z" fill="#5ab9ea" stroke="#2f6f98" stroke-width=".5"/><path d="M8.800 290l1.400 1.200h-1.400z" fill="#2f6f98"/>
<ellipse cx="10.900" cy="314.900" rx="4.700" ry="3.400" fill="#f2f2f2"/><path d="M12.400 317.600l1.600 1.800-.2-2.400z" fill="#f2f2f2"/>
<path d="M6.400 324.200h7.600M6.800 324.200v6.600" stroke="#3a3a3a" stroke-width=".8"/><path d="M10 326l4.400 2.600-2 .3 1.200 2.100-.9.500-1.200-2.100-1.300 1.400z" fill="#151515"/>
<defs><clipPath id="bc365"><rect x="20" y="355" width="110" height="15.600"/></clipPath><clipPath id="bc385"><rect x="20" y="375" width="110" height="15.600"/></clipPath><clipPath id="bc406"><rect x="20" y="398" width="110" height="6.300"/></clipPath></defs>
<circle cx="29.85" cy="365.8" r="5.800" fill="#000" clip-path="url(#bc365)"/>
<circle cx="45.90" cy="365.8" r="5.800" fill="#000" clip-path="url(#bc365)"/>
<circle cx="62.40" cy="365.8" r="5.800" fill="#000" clip-path="url(#bc365)"/>
<circle cx="78.65" cy="365.8" r="5.800" fill="#000" clip-path="url(#bc365)"/>
<circle cx="94.90" cy="365.8" r="5.800" fill="#000" clip-path="url(#bc365)"/>
<circle cx="111.15" cy="365.8" r="5.800" fill="#000" clip-path="url(#bc365)"/>
<circle cx="29.85" cy="385.8" r="5.800" fill="#000" clip-path="url(#bc385)"/>
<circle cx="45.90" cy="385.8" r="5.800" fill="#000" clip-path="url(#bc385)"/>
<circle cx="62.40" cy="385.8" r="5.800" fill="#000" clip-path="url(#bc385)"/>
<circle cx="78.65" cy="385.8" r="5.800" fill="#000" clip-path="url(#bc385)"/>
<circle cx="94.90" cy="385.8" r="5.800" fill="#000" clip-path="url(#bc385)"/>
<circle cx="111.15" cy="385.8" r="5.800" fill="#000" clip-path="url(#bc385)"/>
<circle cx="29.85" cy="406" r="5.800" fill="#000" clip-path="url(#bc406)"/>
<circle cx="45.90" cy="406" r="5.800" fill="#000" clip-path="url(#bc406)"/>
<circle cx="62.40" cy="406" r="5.800" fill="#000" clip-path="url(#bc406)"/>
<circle cx="78.65" cy="406" r="5.800" fill="#000" clip-path="url(#bc406)"/>
<circle cx="94.90" cy="406" r="5.800" fill="#000" clip-path="url(#bc406)"/>
<circle cx="111.15" cy="406" r="5.800" fill="#000" clip-path="url(#bc406)"/>
<path d="M24.800 408v3M25.800 409.500h2.400M27 408.500v2" stroke="#bdbdbf" stroke-width=".6"/>
<path d="M58.1 408.400h6.3M58.1 410.800h6.3" stroke="#a0a0a2" stroke-width="1"/>
<path d="M73.0 408.400h6.8M73.0 410.800h6.8" stroke="#a0a0a2" stroke-width="1"/>
<path d="M86.8 408.400h6.199999999999991M86.8 410.800h6.199999999999991" stroke="#a0a0a2" stroke-width="1"/>
<path d="M101.1 408.400h6.8M101.1 410.800h6.8" stroke="#a0a0a2" stroke-width="1"/>
<path d="M114.8 408.400h7.399999999999994M114.8 410.800h7.399999999999994" stroke="#a0a0a2" stroke-width="1"/>
<g transform="rotate(27.800 32.900 443)"><rect x="29.300" y="441.200" width="7.200" height="3.600" fill="#e8262e" stroke="#f6f6f6" stroke-width=".8"/></g>
<circle cx="95.800" cy="488.400" r="1.700" fill="none" stroke="#e8e8e8" stroke-width=".7"/><circle cx="95.800" cy="488.400" r="2.300" fill="none" stroke="#222" stroke-width=".4"/>
<path d="M172.400 25.600v2.400" stroke="#2a2a2a" stroke-width=".8"/>
<rect x="177" y="26" width="8.400" height="8.800" fill="#141414"/><rect x="178" y="26.500" width="6.800" height="6.600" fill="#fdfdfd"/>
<path d="M188 29.300h4.600l-2.300 2.500z" fill="#2a2a2a"/>
<path d="M207.600 33h-3.600a2 2 0 0 1 0-4h3.800" fill="none" stroke="#929294" stroke-width="1"/><path d="M203.400 27l-3.200 2 3.200 2z" fill="#929294"/><path d="M200.400 29h4" stroke="#929294" stroke-width="1"/>
<path d="M217.800 33.200h-3.400a2.100 2.100 0 0 1 0-4.200h3.200" fill="none" stroke="#141414" stroke-width="1.300"/><path d="M217 26.600l3.600 2.400-3.600 2.400z" fill="#141414"/>
<rect x="234.75" y="29.65" width="1.300" height="1.300" fill="#101010"/><rect x="233.70" y="32.20" width="1.300" height="1.300" fill="#101010"/><rect x="231.15" y="33.25" width="1.300" height="1.300" fill="#101010"/><rect x="228.60" y="32.20" width="1.300" height="1.300" fill="#101010"/><rect x="227.55" y="29.65" width="1.300" height="1.300" fill="#101010"/><rect x="228.60" y="27.10" width="1.300" height="1.300" fill="#101010"/><rect x="231.15" y="26.05" width="1.300" height="1.300" fill="#101010"/><rect x="233.70" y="27.10" width="1.300" height="1.300" fill="#101010"/>
<path d="M242.200 26h3v2.800h2.800v3h-2.800v2.800h-3v-2.800h-2.800v-3h2.800z" fill="#8e8e91" stroke="#98989b" stroke-width=".4"/><rect x="242.400" y="29" width="2.600" height="2.600" fill="#a0a0a3"/>
<path d="M251.400 31.400l4-4 3.200 2.400-3 4z" fill="#f4f4f4"/><path d="M251.200 32.400l3.600-3.600" stroke="#111" stroke-width="1.300"/><path d="M257.600 30c1 .8 1.400 2 1 3.400" stroke="#111" stroke-width=".9" fill="none"/><path d="M254.400 27c.8-1.400 2.800-1.200 3.200.4" stroke="#111" stroke-width=".7" fill="none"/>
<rect x="265.400" y="27.800" width="5.200" height="5.200" fill="none" stroke="#151515" stroke-width=".9"/><path d="M263.600 26l2 2M272.400 26l-2 2M263.600 34.800l2-2M272.400 34.800l-2-2" stroke="#151515" stroke-width="1.100"/>
<rect x="279.6" y="27" width="6.800" height="6.800" fill="#88888b" stroke="#929295" stroke-width=".5"/><path d="M279.6 33.800l6.800-6.800" stroke="#9a9a9d" stroke-width=".7"/>
<rect x="292.3" y="27" width="6.800" height="6.800" fill="#88888b" stroke="#929295" stroke-width=".5"/><path d="M292.3 33.800l6.800-6.800" stroke="#9a9a9d" stroke-width=".7"/>
<path d="M292.300 33.800l6.800-6.800v6.800z" fill="#97979a"/>
<rect x="304.800" y="27" width="6.800" height="6.800" fill="#88888b" stroke="#929295" stroke-width=".5"/><rect x="306.600" y="28.800" width="3.200" height="3.200" fill="#a2a2a5"/>
<rect x="319.09999999999997" y="25.200" width="10.600" height="10.600" fill="#626264"/>
<rect x="330.8" y="25.200" width="10.600" height="10.600" fill="#626264"/>
<path d="M320.600 34v-7l5.600 6.400v-7.400" fill="none" stroke="#1a1a1a" stroke-width="1"/><path d="M320.200 34.400c2 .6 4.400.6 6.400-.6" stroke="#3ea2e8" stroke-width="1.100" fill="none"/>
<path d="M332.600 33.600l1.400-4.600 4.600-1.600v6.200z" fill="none" stroke="#1a1a1a" stroke-width=".9"/><path d="M332.200 34.400c2.400.4 5 .2 7.400-.8" stroke="#3ea2e8" stroke-width="1.100" fill="none"/>
<path d="M348 26v8" stroke="#1a1a1a" stroke-width="1.200"/><path d="M345 28.400l1.600 2.200-1.600 2.200M351 28.400l-1.600 2.200 1.600 2.200" stroke="#3ea2e8" stroke-width="1.100" fill="none"/><path d="M346 34.400h4" stroke="#3ea2e8" stroke-width=".9"/>
<rect x="358.700" y="26" width="18.800" height="9" rx="1" fill="#f6f6f6"/><circle cx="368.100" cy="30.400" r="2.900" fill="#1a1a1a"/>
<text x="368.100" y="32.400" font-size="5.600" font-weight="bold" text-anchor="middle" fill="#fff" font-family="Liberation Sans,sans-serif">?</text>
<path d="M824.200 26.400l-1.800 2.800 1.800 2.800" fill="none" stroke="#909092" stroke-width="1.400"/><path d="M833.200 26.400l1.800 2.800-1.800 2.800M835.600 26.400l1.800 2.800-1.800 2.800" fill="none" stroke="#909092" stroke-width="1.300"/>
<path d="M841 27v4.400M843 27v4.400M845 27v4.400" stroke="#626264" stroke-width=".7"/>
<path d="M943 26.400l1.800 2.800-1.800 2.800" fill="none" stroke="#909092" stroke-width="1.400"/><path d="M954.600 26.400l1.800 2.800-1.800 2.800M957 26.400l1.800 2.800-1.800 2.800" fill="none" stroke="#909092" stroke-width="1.300"/>
<path d="M823 67.4v-4.600q0-1 1-1h2l1 1.200h3q.9 0 .9.900v1" fill="#8e8e91" stroke="#262626" stroke-width=".8"/><path d="M823 67.4v-3.200l1-.6h6" fill="none" stroke="#c4c4c6" stroke-width=".5"/>
<path d="M823 89.4v-4.600q0-1 1-1h2l1 1.200h3q.9 0 .9.900v1" fill="#8e8e91" stroke="#262626" stroke-width=".8"/><path d="M823 89.4v-3.200l1-.6h6" fill="none" stroke="#c4c4c6" stroke-width=".5"/>
<path d="M823 111.4v-4.600q0-1 1-1h2l1 1.200h3q.9 0 .9.900v1" fill="#8e8e91" stroke="#262626" stroke-width=".8"/><path d="M823 111.4v-3.200l1-.6h6" fill="none" stroke="#c4c4c6" stroke-width=".5"/>
<path d="M823 133.4v-4.600q0-1 1-1h2l1 1.200h3q.9 0 .9.900v1" fill="#8e8e91" stroke="#262626" stroke-width=".8"/><path d="M823 133.4v-3.200l1-.6h6" fill="none" stroke="#c4c4c6" stroke-width=".5"/>
<path d="M823 155.4v-4.600q0-1 1-1h2l1 1.200h3q.9 0 .9.900v1" fill="#8e8e91" stroke="#262626" stroke-width=".8"/><path d="M823 155.4v-3.200l1-.6h6" fill="none" stroke="#c4c4c6" stroke-width=".5"/>
<path d="M823 177.4v-4.600q0-1 1-1h2l1 1.200h3q.9 0 .9.900v1" fill="#8e8e91" stroke="#262626" stroke-width=".8"/><path d="M823 177.4v-3.200l1-.6h6" fill="none" stroke="#c4c4c6" stroke-width=".5"/>
<path d="M823 199.4v-4.600q0-1 1-1h2l1 1.200h3q.9 0 .9.900v1" fill="#8e8e91" stroke="#262626" stroke-width=".8"/><path d="M823 199.4v-3.200l1-.6h6" fill="none" stroke="#c4c4c6" stroke-width=".5"/>
<path d="M823 221.4v-4.600q0-1 1-1h2l1 1.200h3q.9 0 .9.900v1" fill="#8e8e91" stroke="#262626" stroke-width=".8"/><path d="M823 221.4v-3.200l1-.6h6" fill="none" stroke="#c4c4c6" stroke-width=".5"/>
<path d="M823 243.4v-4.600q0-1 1-1h2l1 1.200h3q.9 0 .9.900v1" fill="#8e8e91" stroke="#262626" stroke-width=".8"/><path d="M823 243.4v-3.200l1-.6h6" fill="none" stroke="#c4c4c6" stroke-width=".5"/>
<path d="M823 265.4v-4.600q0-1 1-1h2l1 1.200h3q.9 0 .9.900v1" fill="#8e8e91" stroke="#262626" stroke-width=".8"/><path d="M823 265.4v-3.200l1-.6h6" fill="none" stroke="#c4c4c6" stroke-width=".5"/>
<defs><radialGradient id="qg" cx=".4" cy=".35" r=".7"><stop offset="0" stop-color="#b4b4b6"/><stop offset="1" stop-color="#7a7a7c"/></radialGradient></defs><circle cx="828.800" cy="44.900" r="5.900" fill="url(#qg)" stroke="#1c1c1c" stroke-width="1.500"/><path d="M829.600 45.600l5.600 4.600" stroke="#1c1c1c" stroke-width="1.600"/><path d="M828.200 43.800l4 .6-2.800 2.600z" fill="#1c1c1c"/>
<rect x="827.600" y="65.39999999999999" width="7.400" height="7" fill="#3a97dd"/><path d="M828.400 66.2l5.800 5.400M834.200 66.2l-5.800 5.400" stroke="#f2e9a0" stroke-width="1.500"/>
<rect x="827.800" y="87.6" width="7" height="6.800" fill="#f4f4f4" stroke="#2a2a2a" stroke-width=".6"/><path d="M829.400 89.2h3.200l-1 1 2 2-1 1-2-2-1.200 1.200z" fill="#2a2a2a"/>
<rect x="827.800" y="109.6" width="7" height="6.800" fill="#8a8a8d" stroke="#a0a0a3" stroke-width=".5" stroke-dasharray="1 1"/><path d="M828.400 110.2l5.800 5.600M834.200 110.2l-5.800 5.600" stroke="#c9c9cb" stroke-width="1"/>
<rect x="827.800" y="131.6" width="7" height="6.800" fill="#8a8a8d" stroke="#a0a0a3" stroke-width=".5" stroke-dasharray="1 1"/>
<rect x="828.600" y="153.0" width="5.600" height="7.600" fill="#f2f2f2" stroke="#2a2a2a" stroke-width=".5"/><path d="M829.600 154.8h3.600M829.600 156.4h3.600M829.600 158.0h3.600M829.600 159.4h3.600" stroke="#2a2a2a" stroke-width=".8" stroke-dasharray="1.400 .6"/>
<path d="M828 175.8l2.400 2.200M834.400 175.8l-2.400 2.200M828 182.4l2.400-2.200M834.400 182.4l-2.400-2.200" stroke="#1e1e1e" stroke-width="1.100"/>
<rect x="827.600" y="197.8" width="7.400" height="6.400" fill="#f2f2f2" stroke="#1e1e1e" stroke-width=".7"/><path d="M828.400 203.4l2-3 1.400 1.800 1-1.200 1.600 2.400z" fill="#1e1e1e"/>
<rect x="827.600" y="220.20000000000002" width="7.400" height="6" fill="#1e1e1e"/><path d="M829 225.20000000000002l4.400-4" stroke="#bbb" stroke-width="1.400"/>
<circle cx="831.600" cy="245.0" r="3.500" fill="#f2f2f2" stroke="#2a2a2a" stroke-width=".5"/><path d="M829.400 242.8q2 2.200 0 4.400M833.800 242.8q-2 2.200 0 4.400" stroke="#555" stroke-width=".5" fill="none"/>
<circle cx="832" cy="264.0" r=".9" fill="#2a2a2a"/><path d="M832 265.0v3.400M830 266.2h4M832 268.40000000000003l-1 3M832 268.40000000000003l1 3" stroke="#2a2a2a" stroke-width=".8"/>
<path d="M842 38.400v2.800M843 39.800h2.200M844 38.800v2" stroke="#bdbdbf" stroke-width=".6"/>
<rect x="852" y="37" width="6.600" height="4.800" rx=".8" fill="#fff" stroke="#d42a2a" stroke-width="1.300"/><path d="M855 43.400h5v-2.400" stroke="#e4e4e4" stroke-width=".8" fill="none"/>
<rect x="889" y="38.800" width="5.200" height="3.800" fill="#c9c9cb"/><rect x="889.800" y="39.600" width="2" height="1.400" fill="#77777a"/><path d="M903.600 42.400l2-2.800 1.600 1.200" stroke="#b5b5b7" stroke-width=".9" fill="none"/><circle cx="907.400" cy="39.400" r=".9" fill="#c5c5c7"/><path d="M920 38.200v5M918.900 39.400l1.100-1.400 1.100 1.400M918.900 42l1.100 1.400 1.100-1.400" stroke="#e0e0e2" stroke-width=".7" fill="none"/>
<path d="M842.600 138h38.600v-5.200z" fill="#38383a"/><path d="M859.400 131.400v8" stroke="#77777a" stroke-width=".9"/>
<path d="M842.600 143v5h38.400v-5q-5 0-9 2.500t-10 2.500-10-2.500-9.400-2.500z" fill="#38383a"/><path d="M862 141.200v8.400" stroke="#77777a" stroke-width=".9"/>
<circle cx="909.600" cy="134.600" r="2.300" fill="#d8d8d8" stroke="#efefef" stroke-width=".8"/><path d="M908.600 134.600h2" stroke="#222" stroke-width=".7"/><path d="M911.400 136.600l1.800 2" stroke="#1a1a1a" stroke-width="1.200"/>
<circle cx="919.200" cy="134.600" r="2.300" fill="#d8d8d8" stroke="#efefef" stroke-width=".8"/><path d="M918.200 134.600h2M919.200 133.600v2" stroke="#222" stroke-width=".7"/><path d="M921 136.600l1.800 2" stroke="#1a1a1a" stroke-width="1.200"/>
<rect x="925" y="131.400" width="8" height="8" fill="#111"/><rect x="926.600" y="133" width="4.800" height="4.800" fill="none" stroke="#dcdcdc" stroke-width=".6"/>
<rect x="937.800" y="132" width="6.800" height="6.600" fill="#f2f2f2"/><path d="M937.800 132.300h6.800" stroke="#111" stroke-width="1"/><path d="M939.600 133.200l4.600 5" stroke="#111" stroke-width="1.200"/><rect x="938" y="135.800" width="3" height="2.600" fill="#f8f8f8" stroke="#777" stroke-width=".3"/>
<rect x="948" y="132" width="7" height="6.600" fill="#f4f4f4"/><path d="M948 132.300h7" stroke="#111" stroke-width="1"/><path d="M949.200 133.400l5.400 4.800" stroke="#111" stroke-width="1.400"/>
<path d="M906.7 147.800A3.100 3.400 0 1 1 912.7 147.800" fill="none" stroke="#141414" stroke-width="1.700"/>
<path d="M904.6 146.200h4.200l-2.100 2.800z" fill="#141414"/>
<path d="M916.3 147.800A3.100 3.400 0 1 1 922.3 147.800" fill="none" stroke="#141414" stroke-width="1.700"/>
<path d="M920.1999999999999 146.200h4.200l-2.100 2.800z" fill="#141414"/>
<circle cx="929.400" cy="145.500" r="3.100" fill="none" stroke="#3a3a3c" stroke-width="1" stroke-dasharray=".9 1.530"/>
<path d="M938.400 148a3 3.400 0 1 1 5.800 0" fill="none" stroke="#141414" stroke-width="1.700"/><path d="M941.300 143.600v5" stroke="#5e5e60" stroke-width="1.200"/><path d="M937.400 147l1.600 1.800v-2z" fill="#e4e4e4"/>
<path d="M949 148a3 3.400 0 1 1 5.800-1.600" fill="none" stroke="#141414" stroke-width="1.700"/><path d="M952.600 144.600h3v-2l1 3" stroke="#141414" stroke-width="1" fill="none"/><rect x="952.600" y="147.400" width="2.800" height="1.600" fill="#e8e8e8"/>
<path d="M842 155.200v2.800M843 156.600h2.200M844 155.600v2" stroke="#bdbdbf" stroke-width=".6"/>
<path d="M851.600 158.200l2 1.400 4.600-5.600" stroke="#d61f1f" stroke-width="1.100" fill="none"/><path d="M850.800 160.600h7.600" stroke="#111" stroke-width="1.300"/>
<path d="M899.400 158.600l2-2.600 1.600 1.400 1.400-1" stroke="#a5a5a7" stroke-width=".8" fill="none"/><path d="M914 159l1.600-3.400 1.600 3.400z" fill="#a5a5a7"/>
<circle cx="900.200" cy="175.800" r="2.800" fill="#1a1a1a" stroke="#f4f4f4" stroke-width="1.500"/>
<circle cx="912.200" cy="176" r="3.500" fill="#2b82da" stroke="#3a4652" stroke-width=".7"/><ellipse cx="912.600" cy="175.200" rx="2.300" ry="1.500" fill="#4a9cec" stroke="#0e4a8c" stroke-width=".6" transform="rotate(-20 912.600 175.200)"/>
<rect x="920.800" y="172.800" width="7.600" height="7" fill="#3c3c3d" stroke="#3c3c3d" stroke-width=".8" stroke-dasharray=".8 .6"/>
<rect x="934.200" y="174.200" width="5.600" height="5.600" fill="#e8e8e8"/><rect x="932.400" y="172.600" width="5.800" height="5.800" fill="#4aa8f5"/>
<path d="M943.800 175h3.600l-1.800 2.200z" fill="#333"/>
<rect x="872.400" y="192.600" width="2.400" height="6.800" fill="#ea7878"/><rect x="874.800" y="192.600" width="2.400" height="6.800" fill="#4aa6f0"/><rect x="877.200" y="192.600" width="2.400" height="6.800" fill="#7ade6c"/>
<path d="M917.400 195.200h3.600l-1.800 2.200z" fill="#333"/>
<path d="M842 272.400v2.800M843 273.800h2.200M844 272.800v2" stroke="#bdbdbf" stroke-width=".6"/>
<path d="M851.600 272.400l3-1.200 3 1.200-3 1.200zM851.600 274.400l3 1.200 3-1.200M851.600 276.200l3 1.200 3-1.200" fill="#e4e4e4" stroke="#2a2a2a" stroke-width=".5"/>
<circle cx="881.400" cy="274.400" r="2.400" fill="none" stroke="#1a1a1a" stroke-width="1"/><path d="M878.400 272l1.400-1.600 1.400 1.600" fill="#e8e8e8"/><path d="M883 275.200l2.400-.2" stroke="#ddd" stroke-width=".9"/>
<path d="M909.600 276l1.800-2.600 1.200 1.400 1.200-2.800" stroke="#8d8d8f" stroke-width=".7" fill="none"/>
<path d="M892.600 283.600h3.800l-1.900 2.200z" fill="#2e2e2e"/>
<path d="M902.200 284.400h18.600" stroke="#f4f4f4" stroke-width="1.800" stroke-dasharray="1.500 .5"/><path d="M922 279.600v9.600" stroke="#5c5c5e" stroke-width=".9"/>
<path d="M951.800 283.400l1.800-2.200 1.800 2.200zM951.800 285.400l1.800 2.200 1.800-2.200z" fill="#1e1e1e"/>
<path d="M851.800 294.200h3.400l-1.700 2z" fill="#2e2e2e"/>
<ellipse cx="863.600" cy="295" rx="3.500" ry="2.500" fill="#222"/><path d="M861.600 295.400q2 1 4 0" stroke="#e8e8e8" stroke-width=".7" fill="none"/>
<path d="M873.600 291.200v7.600" stroke="#222" stroke-width="1"/><circle cx="873.600" cy="293.200" r="1" fill="#eee"/><path d="M872 295.600h3.200" stroke="#222" stroke-width=".8"/>
<path d="M881.800 290.600h2.800v3.400h-2.800z" fill="#2d8ce8"/><path d="M881.800 294h2.800l-.2 2.800h-2.400z" fill="#f2c21c"/><path d="M882 296.800l1.200 2.600 1.200-2.600z" fill="#2a7fc8"/>
<rect x="890.200" y="294" width="5.800" height="4.800" fill="#222"/><path d="M891.400 294v-1.200a1.700 1.700 0 0 1 3.400 0v1.200" fill="none" stroke="#222" stroke-width=".9"/><rect x="892" y="295.200" width="2.200" height="2.400" fill="#8a8a8c"/>
<rect x="899.200" y="292.800" width="4.200" height="3.400" fill="#222"/><path d="M900 292.800v-.8a1.300 1.300 0 0 1 2.600 0v.8" fill="none" stroke="#222" stroke-width=".8"/><path d="M903.600 298.200l3-2.600" stroke="#e4e4e4" stroke-width="1.200"/><rect x="903" y="296" width="2" height="2.400" fill="#9c9c9e"/>
<path d="M913 293l4 4M917 293l-4 4" stroke="#98989a" stroke-width=".9"/><path d="M919.600 294.400h3l-1.500 1.800z" fill="#59595b"/>
<path d="M928 298l6-6.400M929 292l5 6" stroke="#98989a" stroke-width=".8"/><path d="M935.400 294.400h3l-1.500 1.800z" fill="#59595b"/>
<rect x="945.400" y="294" width="4.200" height="4.200" fill="#f0f0f0"/><rect x="943.600" y="292.200" width="4.200" height="4.200" fill="#3f8fe8"/><path d="M952.200 294.400h3.400l-1.700 2z" fill="#2e2e2e"/>
<path d="M841 304.600l3.700-1.500 3.700 1.500-3.700 1.500zM841 306.700l3.700 1.500 3.700-1.500M841 308.800l3.700 1.500 3.700-1.500" fill="#e8e8e8" stroke="#2a2a2a" stroke-width=".6"/>
<path d="M880 303.200h5.400v5l-1.600 1.800h-3.800z" fill="#f4f4f4" stroke="#3a3a3a" stroke-width=".4"/><path d="M885.400 308.200h-1.600v1.800" fill="#9a9a9a"/>
<path d="M889.600 303.200h5.400v5l-1.600 1.800h-3.800z" fill="#f4f4f4" stroke="#3a3a3a" stroke-width=".4"/><path d="M894 309h2.600M895.300 307.700v2.600" stroke="#e8e8e8" stroke-width=".8"/>
<path d="M899.400 303.600h4v5.400h-4z" fill="#9a9a9c" stroke="#3a3a3a" stroke-width=".4"/><path d="M901.600 304.600h4.400v3.800l-1.400 1.600h-3z" fill="#f4f4f4" stroke="#3a3a3a" stroke-width=".4"/>
<circle cx="912.200" cy="306.800" r="2.600" fill="none" stroke="#8c8c8e" stroke-width=".8"/><path d="M912.200 305v2.400" stroke="#8c8c8e" stroke-width=".8"/>
<circle cx="922.300" cy="306.800" r="2.600" fill="none" stroke="#8c8c8e" stroke-width=".8"/><path d="M921 307.400l1.300-1.600 1.300 1.600" stroke="#8c8c8e" stroke-width=".7" fill="none"/>
<rect x="928.400" y="304" width="7.800" height="5.600" fill="#1a1a1a"/><rect x="930.400" y="305.400" width="2.800" height="2.800" fill="#f4f4f4"/>
<path d="M940 309.600v-5h2.600l1.400 1.400v3.600" fill="none" stroke="#8c8c8e" stroke-width=".8"/>
<path d="M949.800 305.200h4.400l-.5 4.800h-3.400z" fill="#f4f4f4" stroke="#3a3a3a" stroke-width=".4"/><path d="M949.200 304.600h5.600" stroke="#f4f4f4" stroke-width="1"/><path d="M951 303.600h2" stroke="#f4f4f4" stroke-width=".8"/>
<rect x="884.400" y="364.200" width="8.400" height="9.600" rx="1" fill="#6c6c6e" stroke="#5a5a5c" stroke-width=".5"/><path d="M886.200 365.800h3.200l1.600 1.600v4.800h-4.800z" fill="#f4f4f4" stroke="#222" stroke-width=".5"/><path d="M889.400 365.800v1.600h1.600" fill="none" stroke="#222" stroke-width=".5"/>
<path d="M843 321.8q3-3.400 6 0q-3 2.600-6 0z" fill="#dcdcdc" stroke="#1a1a1a" stroke-width=".6"/><circle cx="846.200" cy="321.6" r="1.500" fill="#111"/>
<path d="M843 370.8q3-3.400 6 0q-3 2.600-6 0z" fill="#dcdcdc" stroke="#1a1a1a" stroke-width=".6"/><circle cx="846.200" cy="370.6" r="1.500" fill="#111"/>
<path d="M853.200 324.200q3.600-.4 4.600-4.600" stroke="#1a1a1a" stroke-width=".8" fill="none"/><path d="M857 319.200l1.200.6-.8.800z" fill="#1a1a1a"/>
<path d="M840.600 489.500l1 .8" stroke="#888" stroke-width=".5"/>
</svg>
<div id="menus">
<div style="left:44px;top:46px;width:301.8px;height:655px;background:#7c7d80;border:1px solid #4c4c4e;box-sizing:border-box;box-shadow:inset -2px -2px 0 #86878a,1px 1px 1px rgba(0,0,0,.2);"></div>
<div style="left:78px;top:48px;width:1.6px;height:650.8px;background:#6a6a6d;"></div>
<div style="left:79.6px;top:48px;width:1.2px;height:650.8px;background:#88898c;"></div>
<span class="t" style="top:55.28px;font-size:12.2px;line-height:14.64px;color:#a3a4a7;left:85px;transform-origin:0 50%;transform:scaleX(0.905);">Undo</span>
<span class="t" style="top:55.28px;font-size:12.2px;line-height:14.64px;color:#a3a4a7;right:1616px;transform-origin:100% 50%;transform:scaleX(0.984);">Ctrl+Z</span>
<span class="t" style="top:79.28px;font-size:12.2px;line-height:14.64px;color:#e4e4e4;left:85px;transform-origin:0 50%;transform:scaleX(0.905);">Redo</span>
<span class="t" style="top:79.28px;font-size:12.2px;line-height:14.64px;color:#e4e4e4;right:1616px;transform-origin:100% 50%;transform:scaleX(0.964);">Ctrl+Y</span>
<div style="left:82.8px;top:100.8px;width:258.4px;height:1.4px;background:#676769;"></div>
<div style="left:82.8px;top:102.2px;width:258.4px;height:1.4px;background:#8c8d90;"></div>
<span class="t" style="top:111.28px;font-size:12.2px;line-height:14.64px;color:#e4e4e4;left:85px;transform-origin:0 50%;transform:scaleX(0.906);">Cut</span>
<span class="t" style="top:111.28px;font-size:12.2px;line-height:14.64px;color:#e4e4e4;right:1616px;transform-origin:100% 50%;transform:scaleX(0.964);">Ctrl+X</span>
<span class="t" style="top:135.28px;font-size:12.2px;line-height:14.64px;color:#e4e4e4;left:85px;transform-origin:0 50%;transform:scaleX(0.934);">Copy</span>
<span class="t" style="top:135.28px;font-size:12.2px;line-height:14.64px;color:#e4e4e4;right:1616px;transform-origin:100% 50%;transform:scaleX(0.945);">Ctrl+C</span>
<span class="t" style="top:159.28px;font-size:12.2px;line-height:14.64px;color:#e4e4e4;left:85px;transform-origin:0 50%;transform:scaleX(0.885);">Paste</span>
<span class="t" style="top:159.28px;font-size:12.2px;line-height:14.64px;color:#e4e4e4;right:1616px;transform-origin:100% 50%;transform:scaleX(0.964);">Ctrl+V</span>
<div style="left:82.8px;top:180.8px;width:258.4px;height:1.4px;background:#676769;"></div>
<div style="left:82.8px;top:182.2px;width:258.4px;height:1.4px;background:#8c8d90;"></div>
<span class="t" style="top:191.28px;font-size:12.2px;line-height:14.64px;color:#e4e4e4;left:85px;transform-origin:0 50%;transform:scaleX(0.892);">Clear</span>
<span class="t" style="top:191.28px;font-size:12.2px;line-height:14.64px;color:#e4e4e4;right:1616px;transform-origin:100% 50%;transform:scaleX(0.896);">Del</span>
<span class="t" style="top:215.28px;font-size:12.2px;line-height:14.64px;color:#a3a4a7;left:85px;transform-origin:0 50%;transform:scaleX(0.936);">Clear Outside Selection</span>
<span class="t" style="top:215.28px;font-size:12.2px;line-height:14.64px;color:#a3a4a7;right:1616px;transform-origin:100% 50%;transform:scaleX(1.015);">Shift+Del</span>
<span class="t" style="top:239.28px;font-size:12.2px;line-height:14.64px;color:#e4e4e4;left:85px;transform-origin:0 50%;transform:scaleX(0.968);">Remove tones (Technology preview)</span>
<div style="left:328.4px;top:240.6px;width:0;height:0;border-left:7px solid #f2f2f2;border-top:5.6px solid transparent;border-bottom:5.6px solid transparent;"></div>
<span class="t" style="top:263.28px;font-size:12.2px;line-height:14.64px;color:#e4e4e4;left:85px;transform-origin:0 50%;transform:scaleX(0.975);">Fill</span>
<span class="t" style="top:263.28px;font-size:12.2px;line-height:14.64px;color:#e4e4e4;right:1616px;transform-origin:100% 50%;transform:scaleX(1.018);">Alt+Del</span>
<span class="t" style="top:287.28px;font-size:12.2px;line-height:14.64px;color:#e4e4e4;left:85px;transform-origin:0 50%;transform:scaleX(0.950);">Advanced Fill...</span>
<span class="t" style="top:311.28px;font-size:12.2px;line-height:14.64px;color:#e4e4e4;left:85px;transform-origin:0 50%;transform:scaleX(0.973);">Colorize (Technology preview)</span>
<div style="left:328.4px;top:312.6px;width:0;height:0;border-left:7px solid #f2f2f2;border-top:5.6px solid transparent;border-bottom:5.6px solid transparent;"></div>
<span class="t" style="top:335.28px;font-size:12.2px;line-height:14.64px;color:#e4e4e4;left:85px;transform-origin:0 50%;transform:scaleX(0.987);">Change color of line to drawing</span>
<span class="t" style="top:359.28px;font-size:12.2px;line-height:14.64px;color:#a3a4a7;left:85px;transform-origin:0 50%;transform:scaleX(0.958);">Outline Selection(G)...</span>
<span class="t" style="top:383.28px;font-size:12.2px;line-height:14.64px;color:#e4e4e4;left:85px;transform-origin:0 50%;transform:scaleX(0.982);">Convert brightness to opacity</span>
<div style="left:82.8px;top:404.8px;width:258.4px;height:1.4px;background:#676769;"></div>
<div style="left:82.8px;top:406.2px;width:258.4px;height:1.4px;background:#8c8d90;"></div>
<span class="t" style="top:415.28px;font-size:12.2px;line-height:14.64px;color:#e4e4e4;left:85px;transform-origin:0 50%;transform:scaleX(0.940);">Register Material(J)</span>
<div style="left:328.4px;top:416.6px;width:0;height:0;border-left:7px solid #f2f2f2;border-top:5.6px solid transparent;border-bottom:5.6px solid transparent;"></div>
<span class="t" style="top:439.28px;font-size:12.2px;line-height:14.64px;color:#e4e4e4;left:85px;transform-origin:0 50%;transform:scaleX(0.974);">Tonal Correction(D)</span>
<div style="left:328.4px;top:440.6px;width:0;height:0;border-left:7px solid #f2f2f2;border-top:5.6px solid transparent;border-bottom:5.6px solid transparent;"></div>
<div style="left:47.4px;top:458.2px;width:293.2px;height:23.6px;background:linear-gradient(#86959f,#70828e);border-top:1px solid #8c9aa4;box-sizing:border-box;"></div>
<span class="t" style="top:463.28px;font-size:12.2px;line-height:14.64px;color:#e4e4e4;left:85px;transform-origin:0 50%;transform:scaleX(0.961);">Transform</span>
<div style="left:328.4px;top:464.6px;width:0;height:0;border-left:7px solid #f2f2f2;border-top:5.6px solid transparent;border-bottom:5.6px solid transparent;"></div>
<div style="left:82.8px;top:484.8px;width:258.4px;height:1.4px;background:#676769;"></div>
<div style="left:82.8px;top:486.2px;width:258.4px;height:1.4px;background:#8c8d90;"></div>
<span class="t" style="top:495.28px;font-size:12.2px;line-height:14.64px;color:#e4e4e4;left:85px;transform-origin:0 50%;transform:scaleX(0.947);">Change Image Resolution...</span>
<span class="t" style="top:519.28px;font-size:12.2px;line-height:14.64px;color:#e4e4e4;left:85px;transform-origin:0 50%;transform:scaleX(0.898);">Change Canvas Size...</span>
<span class="t" style="top:543.28px;font-size:12.2px;line-height:14.64px;color:#a3a4a7;left:85px;transform-origin:0 50%;transform:scaleX(0.933);">Crop(Z)</span>
<span class="t" style="top:567.28px;font-size:12.2px;line-height:14.64px;color:#e4e4e4;left:85px;transform-origin:0 50%;transform:scaleX(0.969);">Rotate/Invert canvas</span>
<div style="left:328.4px;top:568.6px;width:0;height:0;border-left:7px solid #f2f2f2;border-top:5.6px solid transparent;border-bottom:5.6px solid transparent;"></div>
<span class="t" style="top:591.28px;font-size:12.2px;line-height:14.64px;color:#e4e4e4;left:85px;transform-origin:0 50%;transform:scaleX(0.923);">Canvas Properties...</span>
<div style="left:82.8px;top:612.8px;width:258.4px;height:1.4px;background:#676769;"></div>
<div style="left:82.8px;top:614.2px;width:258.4px;height:1.4px;background:#8c8d90;"></div>
<span class="t" style="top:623.28px;font-size:12.2px;line-height:14.64px;color:#e4e4e4;left:85px;transform-origin:0 50%;transform:scaleX(0.950);">Clear Memory</span>
<div style="left:328.4px;top:624.6px;width:0;height:0;border-left:7px solid #f2f2f2;border-top:5.6px solid transparent;border-bottom:5.6px solid transparent;"></div>
<div style="left:82.8px;top:644.8px;width:258.4px;height:1.4px;background:#676769;"></div>
<div style="left:82.8px;top:646.2px;width:258.4px;height:1.4px;background:#8c8d90;"></div>
<span class="t" style="top:655.28px;font-size:12.2px;line-height:14.64px;color:#e4e4e4;left:85px;transform-origin:0 50%;transform:scaleX(0.962);">Obtain screen color(X)...</span>
<span class="t" style="top:679.28px;font-size:12.2px;line-height:14.64px;color:#e4e4e4;left:85px;transform-origin:0 50%;transform:scaleX(0.987);">Obtain screen color by hiding windows...</span>
<div style="left:343.2px;top:459px;width:298.4px;height:197.6px;background:#7c7d80;border-left:1px solid #4c4c4e;border-top:1px solid #5a5a5c;box-sizing:border-box;box-shadow:inset -2px -2px 0 #85868a,2.400px 2.600px 0 #2b2b2c;"></div>
<div style="left:376px;top:461.2px;width:1.6px;height:194px;background:#6a6a6d;"></div>
<div style="left:377.6px;top:461.2px;width:1.2px;height:194px;background:#88898c;"></div>
<span class="t" style="top:467.28px;font-size:12.2px;line-height:14.64px;color:#e4e4e4;left:383.6px;transform-origin:0 50%;transform:scaleX(0.974);">Scale up/Scale down/Rotate...</span>
<span class="t" style="top:467.28px;font-size:12.2px;line-height:14.64px;color:#e4e4e4;right:1318.8px;transform-origin:100% 50%;transform:scaleX(1.013);">Ctrl+T</span>
<span class="t" style="top:491.28px;font-size:12.2px;line-height:14.64px;color:#e4e4e4;left:383.6px;transform-origin:0 50%;transform:scaleX(0.934);">Free Transform(D)...</span>
<span class="t" style="top:491.28px;font-size:12.2px;line-height:14.64px;color:#e4e4e4;right:1318.8px;transform-origin:100% 50%;transform:scaleX(1.032);">Ctrl+Shift+T</span>
<div style="left:380.6px;top:512.8px;width:258.6px;height:1.4px;background:#676769;"></div>
<div style="left:380.6px;top:514.2px;width:258.6px;height:1.4px;background:#8c8d90;"></div>
<span class="t" style="top:523.28px;font-size:12.2px;line-height:14.64px;color:#e4e4e4;left:383.6px;transform-origin:0 50%;transform:scaleX(0.989);">Flip Horizontal...</span>
<div style="left:347.2px;top:542.2px;width:290px;height:23.6px;background:linear-gradient(#86959f,#70828e);border-top:1px solid #8c9aa4;box-sizing:border-box;"></div>
<span class="t" style="top:547.28px;font-size:12.2px;line-height:14.64px;color:#e4e4e4;left:383.6px;transform-origin:0 50%;transform:scaleX(0.972);">Flip Vertical...</span>
<div style="left:380.6px;top:568.8px;width:258.6px;height:1.4px;background:#676769;"></div>
<div style="left:380.6px;top:570.2px;width:258.6px;height:1.4px;background:#8c8d90;"></div>
<span class="t" style="top:579.28px;font-size:12.2px;line-height:14.64px;color:#e4e4e4;left:383.6px;transform-origin:0 50%;transform:scaleX(0.971);">Mesh Transformation...</span>
<div style="left:380.6px;top:600.8px;width:258.6px;height:1.4px;background:#676769;"></div>
<div style="left:380.6px;top:602.2px;width:258.6px;height:1.4px;background:#8c8d90;"></div>
<span class="t" style="top:611.28px;font-size:12.2px;line-height:14.64px;color:#a3a4a7;left:383.6px;transform-origin:0 50%;transform:scaleX(0.904);">OK(F)...</span>
<span class="t" style="top:635.28px;font-size:12.2px;line-height:14.64px;color:#a3a4a7;left:383.6px;transform-origin:0 50%;transform:scaleX(0.906);">Cancel...</span>
</div>
</div></body></html>
